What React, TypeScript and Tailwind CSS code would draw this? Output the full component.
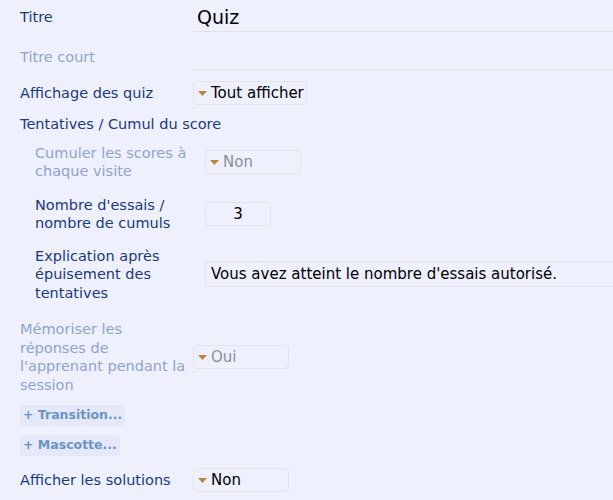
import React from "react";

const LABEL = "text-[14.5px] leading-[18.5px] text-[#1b3a7b]";
const LABEL_OFF = "text-[14.5px] leading-[18.5px] text-[#8ea4ca]";

function Caret() {
  return (
    <svg width="9" height="5" viewBox="0 0 9 5" className="shrink-0">
      <path d="M0 0 L9 0 L4.5 5 Z" fill="#b8873b" />
    </svg>
  );
}

function Select({ value, width, muted }: { value: string; width: string; muted?: boolean }) {
  return (
    <div
      className={`flex h-[24px] items-center gap-[4px] rounded-[4px] border border-[#e4e3e6] pl-[4px] ${width}`}
    >
      <Caret />
      <span className={`text-[15px] ${muted ? "text-[#8c8f98]" : "text-black"}`}>{value}</span>
    </div>
  );
}

function AddButton({ label }: { label: string }) {
  return (
    <div className="flex">
      <button className="flex h-[21px] items-center rounded-[4px] bg-[#e5e8f8] px-[3px] text-[12.5px] font-bold text-[#6b94c6]">
        + {label}
      </button>
    </div>
  );
}

export default function App() {
  return (
    <div className="min-h-[500px] w-full overflow-hidden bg-[#eef0fe] font-['DejaVu_Sans',Verdana,sans-serif]">
      <div className="flex flex-col pl-[20px]">
        {/* Titre */}
        <div className="mt-[3px] flex h-[29px] items-center">
          <span className={`${LABEL} w-[173px] shrink-0`}>Titre</span>
          <div className="flex h-full flex-1 items-center border-b border-[#e2e1e2] pl-[4px]">
            <span className="text-[19px] text-black">Quiz</span>
          </div>
        </div>

        {/* Titre court */}
        <div className="mt-[9px] flex h-[29px] items-center">
          <span className={`${LABEL_OFF} w-[173px] shrink-0 pt-[3px]`}>Titre court</span>
          <div className="h-full flex-1 border-b border-[#e2e1e2]" />
        </div>

        {/* Affichage */}
        <div className="mt-[11px] flex h-[24px] items-center">
          <span className={`${LABEL} w-[173px] shrink-0`}>Affichage des quiz</span>
          <Select value="Tout afficher" width="w-[114px]" />
        </div>

        <div className={`${LABEL} mt-[10px]`}>Tentatives / Cumul du score</div>

        <div className="flex flex-col pl-[15px]">
          <div className="mt-[10px] flex items-center">
            <span className={`${LABEL_OFF} w-[170px] shrink-0`}>
              Cumuler les scores à
              <br />
              chaque visite
            </span>
            <Select value="Non" width="w-[96px]" muted />
          </div>

          <div className="mt-[15px] flex items-center">
            <span className={`${LABEL} w-[170px] shrink-0`}>
              Nombre d'essais /
              <br />
              nombre de cumuls
            </span>
            <div className="flex h-[24px] w-[66px] items-center justify-center rounded-[4px] border border-[#e4e3e6] text-[15px] text-black">
              3
            </div>
          </div>

          <div className="mt-[14px] flex items-center">
            <span className={`${LABEL} w-[170px] shrink-0`}>
              Explication après
              <br />
              épuisement des
              <br />
              tentatives
            </span>
            <div className="flex h-[26px] flex-1 items-center rounded-l-[4px] border border-r-0 border-[#e4e3e6] pl-[5px] text-[15px] whitespace-nowrap text-black">
              Vous avez atteint le nombre d'essais autorisé.
            </div>
          </div>
        </div>

        <div className="mt-[18px] flex items-center">
          <span className={`${LABEL_OFF} w-[173px] shrink-0`}>
            Mémoriser les
            <br />
            réponses de
            <br />
            l'apprenant pendant la
            <br />
            session
          </span>
          <Select value="Oui" width="w-[96px]" muted />
        </div>

        <div className="mt-[11px]">
          <AddButton label="Transition..." />
        </div>
        <div className="mt-[9px]">
          <AddButton label="Mascotte..." />
        </div>

        <div className="mt-[12px] flex h-[24px] items-center">
          <span className={`${LABEL} w-[173px] shrink-0`}>Afficher les solutions</span>
          <Select value="Non" width="w-[96px]" />
        </div>
      </div>
    </div>
  );
}
